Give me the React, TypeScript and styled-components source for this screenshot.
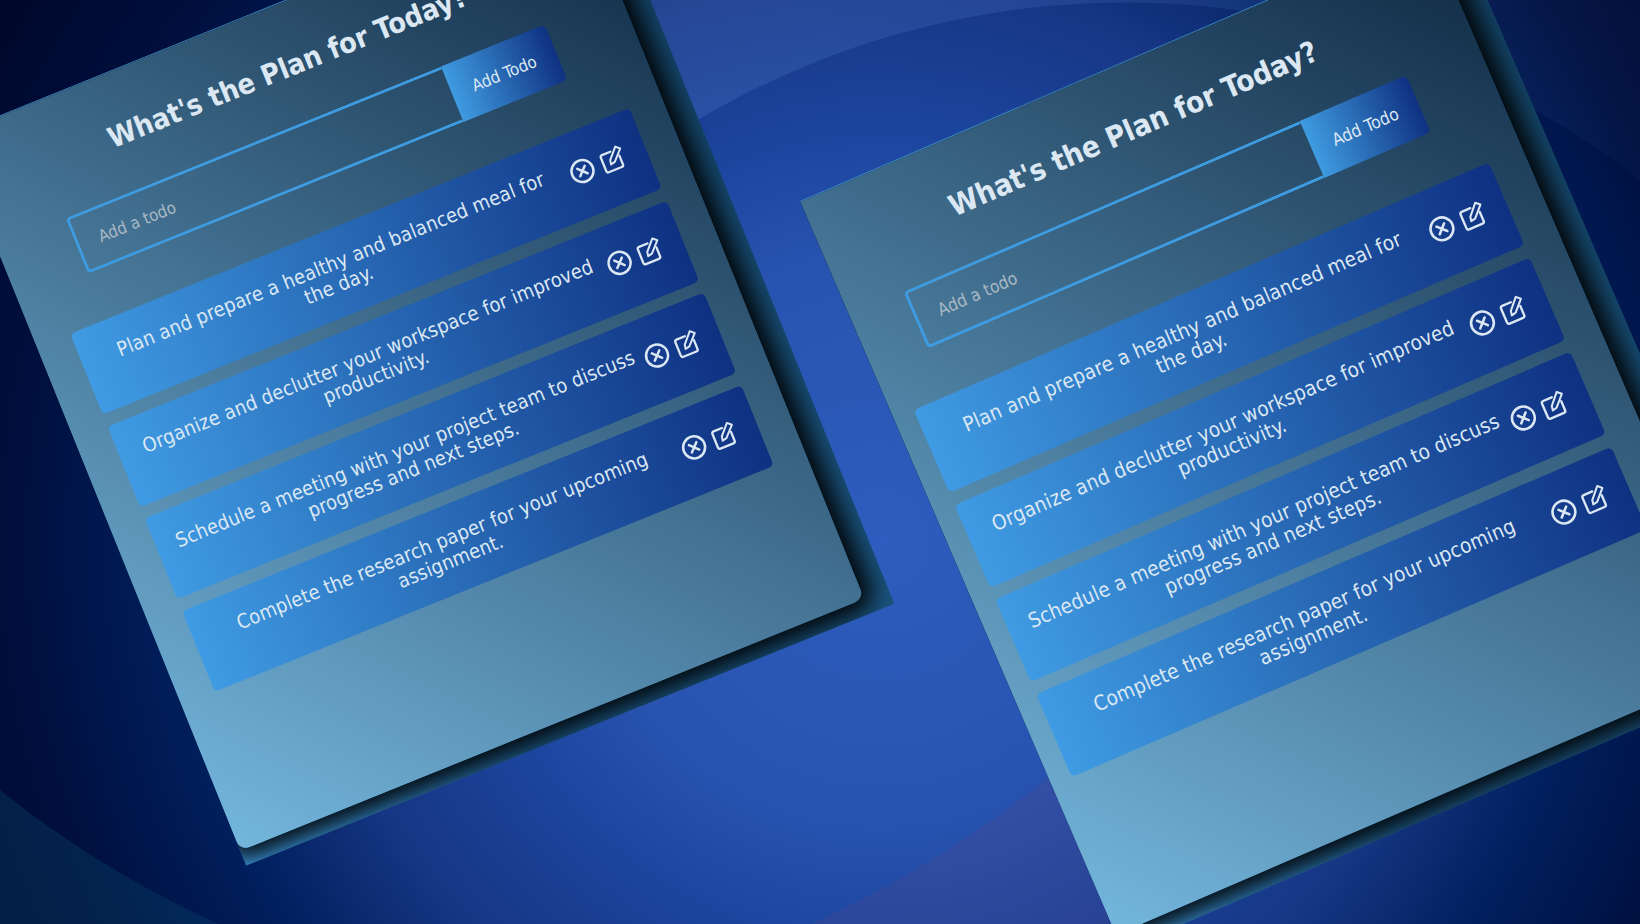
import React from "react";
import styled, { createGlobalStyle } from "styled-components";

const FONT = `"DejaVu Sans Condensed", "DejaVu Sans", sans-serif`;

const Global = createGlobalStyle`
  html, body { margin: 0; padding: 0; width: 100%; height: 100%; overflow: hidden; }
  body { font-family: ${FONT}; }
  #root { width: 100%; height: 100%; }
  * { box-sizing: border-box; }
`;

const Page = styled.div`
  position: relative;
  width: 1640px;
  height: 924px;
  overflow: hidden;
  background: radial-gradient(circle at 880px 540px, #2d5dbe 0, #2853b0 280px, #1c469f 400px, #173684 560px, #01205f 700px, #000f3e 860px, #00072a 1030px);
`;

const Backdrop = styled.svg`
  position: absolute;
  inset: 0;
  width: 1640px;
  height: 924px;
`;

const Frame = styled.div<{ $x: number; $y: number; $w: number; $angle: number; $scale: number }>`
  position: absolute;
  left: ${(p) => p.$x}px;
  top: ${(p) => p.$y}px;
  width: ${(p) => p.$w + 26}px;
  height: 788px;
  padding: 0 26px 16px 0;
  overflow: hidden;
  border-top: 1px solid #3f8ac0;
  transform-origin: 0 0;
  transform: rotate(${(p) => p.$angle}deg) scale(${(p) => p.$scale});
  background: linear-gradient(to top right, #3f9be0 0, #1f5c8a 22%, #123f60 100%);
`;

const Card = styled.section<{ $padL: number; $padR: number }>`
  height: 100%;
  padding: 0 ${(p) => p.$padR}px 0 ${(p) => p.$padL}px;
  border-radius: 0 10px 10px 10px;
  background: linear-gradient(to top right, #74b6dc, #102a44);
  box-shadow: 0 0 22px 11px rgba(0, 0, 0, 0.92);
`;

const Title = styled.h1`
  margin: 0;
  padding-top: 44px;
  height: 119px;
  text-align: center;
  font-size: 28.5px;
  line-height: 38px;
  font-weight: 700;
  color: #dbe8f3;
`;

const Form = styled.form<{ $left: number; $w: number }>`
  display: flex;
  width: ${(p) => p.$w}px;
  height: 60px;
  margin: 0 0 49px ${(p) => p.$left}px;
`;

const Input = styled.input`
  flex: 1;
  min-width: 0;
  height: 100%;
  padding: 0 21px;
  border: 3px solid #3f9be0;
  border-right: none;
  border-radius: 5px 0 0 5px;
  background: transparent;
  outline: none;
  font: 16.8px ${FONT};
  color: #dbe8f3;
  &::placeholder { color: #a9b9c6; opacity: 1; }
`;

const AddButton = styled.button`
  width: 112px;
  height: 100%;
  border: none;
  border-radius: 0 5px 5px 0;
  background: linear-gradient(to right, #3f9be0, #0f3182);
  font: 16.8px ${FONT};
  color: #dbe8f3;
`;

const List = styled.ul`
  list-style: none;
  margin: 0;
  padding: 0;
  display: flex;
  flex-direction: column;
  gap: 12.5px;
`;

const Item = styled.li`
  display: flex;
  align-items: center;
  height: 87px;
  padding: 0 22px 0 12px;
  border-radius: 5px;
  background: linear-gradient(to right, #3f9be3, #0f3182);
  color: #dbe8f3;
`;

const ItemText = styled.p`
  flex: 1;
  margin: 0;
  text-align: center;
  font-size: 20px;
  letter-spacing: 0.15px;
  line-height: 22px;
`;

const Icons = styled.div`
  display: flex;
  align-items: center;
  gap: 6px;
  margin-bottom: 6px;
  color: #dbe8f3;
`;

const IconSvg = styled.svg`
  width: 26px;
  height: 26px;
  fill: none;
  stroke: currentColor;
  stroke-linecap: round;
  stroke-linejoin: round;
`;

const CloseIcon = () => (
  <IconSvg viewBox="0 0 26 26" strokeWidth={2.5}>
    <circle cx="13" cy="13" r="11" />
    <path d="M9 9 L17 17 M17 9 L9 17" />
  </IconSvg>
);

const EditIcon = () => (
  <IconSvg viewBox="0 0 26 26" strokeWidth={2.3}>
    <path d="M14 5.5 H5 Q3 5.5 3 7.5 V22 Q3 24 5 24 H19 Q21 24 21 22 V12.5" />
    <path d="M10 17.5 L10.8 13.2 L20.5 2.6 L24.4 6.2 L14.4 16.6 Z" strokeWidth={2} />
  </IconSvg>
);

const todos = [
  ["Plan and prepare a healthy and balanced meal for", "the day."],
  ["Organize and declutter your workspace for improved", "productivity."],
  ["Schedule a meeting with your project team to discuss", "progress and next steps."],
  ["Complete the research paper for your upcoming", "assignment."],
];

type PlannerProps = {
  x: number; y: number; angle: number; scale: number; w: number;
  padL: number; padR: number; formLeft: number; formW: number;
};

function Planner({ x, y, angle, scale, w, padL, padR, formLeft, formW }: PlannerProps) {
  return (
    <Frame $x={x} $y={y} $w={w} $angle={angle} $scale={scale}>
      <Card $padL={padL} $padR={padR}>
        <Title>What's the Plan for Today?</Title>
        <Form $left={formLeft} $w={formW}>
          <Input placeholder="Add a todo" readOnly />
          <AddButton type="button">Add Todo</AddButton>
        </Form>
        <List>
          {todos.map(([first, second]) => (
            <Item key={first}>
              <ItemText>
                {first}
                <br />
                {second}
              </ItemText>
              <Icons>
                <CloseIcon />
                <EditIcon />
              </Icons>
            </Item>
          ))}
        </List>
      </Card>
    </Frame>
  );
}

export default function App() {
  return (
    <>
      <Global />
      <Page>
        <Backdrop viewBox="0 0 1640 924">
          <defs>
            <linearGradient id="topLight" x1="0" x2="1" y1="0" y2="0">
              <stop offset="0" stopColor="#7fb0ff" stopOpacity="0.16" />
              <stop offset="0.5" stopColor="#7fb0ff" stopOpacity="0.12" />
              <stop offset="1" stopColor="#7fb0ff" stopOpacity="0.03" />
            </linearGradient>
          </defs>
          <path d="M500 282 A850 868 0 0 1 1640 180 L1640 0 L500 0 Z" fill="url(#topLight)" />
          <path d="M0 790 Q100 870 218 924 L0 924 Z" fill="#0a5070" fillOpacity="0.3" />
          <path d="M812 924 Q950 860 1070 760 L1150 924 Z" fill="#6a4a80" fillOpacity="0.18" />
        </Backdrop>
        <Planner x={-49} y={135} angle={-22} scale={1} w={673} padL={36} padR={34} formLeft={39} formW={517} />
        <Planner x={800} y={201} angle={-23.3} scale={1.035} w={661} padL={20.5} padR={35} formLeft={36.5} formW={529} />
      </Page>
    </>
  );
}
